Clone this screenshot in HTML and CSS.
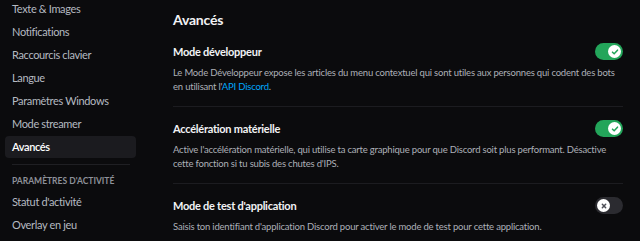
FILE: index.html
```html
<!DOCTYPE html>
<html lang="fr">
  <head>
    <meta charset="UTF-8" />
    <title>Paramètres - Avancés</title>
    <link rel="stylesheet" href="styles.css">
  </head>
  <body>
    <div class="layout">
      <nav class="sidebar">
        <div class="nav-item">Texte &amp; Images</div>
        <div class="nav-item">Notifications</div>
        <div class="nav-item">Raccourcis clavier</div>
        <div class="nav-item">Langue</div>
        <div class="nav-item">Paramètres Windows</div>
        <div class="nav-item">Mode streamer</div>
        <div class="nav-item selected">Avancés</div>
        <div class="nav-sep"></div>
        <div class="nav-header">Paramètres d'activité</div>
        <div class="nav-item">Statut d'activité</div>
        <div class="nav-item">Overlay en jeu</div>
      </nav>

      <main class="content">
        <h2 class="page-title">Avancés</h2>

        <section class="setting">
          <div class="setting-row">
            <h3 class="setting-title">Mode développeur</h3>
            <div class="switch on">
              <span class="knob">
                <svg viewBox="0 0 12 12"><path d="M3 6.2l2 2 4-4.4" /></svg>
              </span>
            </div>
          </div>
          <p class="setting-desc">
            Le Mode Développeur expose les articles du menu contextuel qui sont utiles aux personnes qui codent des bots
            en utilisant l'<a href="#">API Discord</a>.
          </p>
        </section>

        <section class="setting">
          <div class="setting-row">
            <h3 class="setting-title">Accélération matérielle</h3>
            <div class="switch on">
              <span class="knob">
                <svg viewBox="0 0 12 12"><path d="M3 6.2l2 2 4-4.4" /></svg>
              </span>
            </div>
          </div>
          <p class="setting-desc">
            Active l'accélération matérielle, qui utilise ta carte graphique pour que Discord soit plus performant. Désactive
            cette fonction si tu subis des chutes d'IPS.
          </p>
        </section>

        <section class="setting">
          <div class="setting-row">
            <h3 class="setting-title">Mode de test d'application</h3>
            <div class="switch off">
              <span class="knob">
                <svg viewBox="0 0 12 12"><path d="M4 4l4 4M8 4l-4 4" /></svg>
              </span>
            </div>
          </div>
          <p class="setting-desc">
            Saisis ton identifiant d'application Discord pour activer le mode de test pour cette application.
          </p>
        </section>
      </main>
    </div>
  </body>
</html>
```

FILE: styles.css
```css
body {
  margin: 0;
  background: #0b0b0d;
  font-family: Lato, "Noto Sans", sans-serif;
  color: #b5bac1;
  overflow: hidden;
}
.layout {
  display: flex;
  height: 241px;
}
.sidebar {
  width: 131px;
  padding: 0 8px 0 5px;
  margin-top: -2px;
  flex-shrink: 0;
}
.nav-item {
  height: 22px;
  line-height: 22px;
  margin-bottom: 1px;
  padding: 0 7px;
  border-radius: 4px;
  font-size: 11px;
  letter-spacing: -0.35px;
  color: #b5bac1;
  white-space: nowrap;
}
.nav-item.selected {
  background: #1b1b1f;
  color: #fff;
  font-weight: 600;
}
.nav-sep {
  height: 1px;
  background: #1f1f23;
  margin: 6px 6px 8px 7px;
}
.nav-header {
  padding: 0 7px;
  font-size: 8.5px;
  font-weight: 700;
  text-transform: uppercase;
  color: #8e9199;
  height: 16px;
  line-height: 16px;
  margin-bottom: 2px;
}
.content {
  flex: 1;
  padding: 0 17px 0 29px;
}
.page-title {
  margin: 10px 0 13px;
  font-size: 14px;
  letter-spacing: -0.2px;
  line-height: 20px;
  font-weight: 700;
  color: #f2f3f5;
}
.setting {
  padding: 0 0 12px;
  border-bottom: 1px solid #1c1c20;
}
.setting + .setting {
  padding-top: 13px;
}
.setting-row {
  display: flex;
  align-items: center;
  justify-content: space-between;
  height: 17px;
}
.setting-title {
  margin: 0;
  font-size: 11px;
  letter-spacing: -0.25px;
  font-weight: 700;
  color: #f2f3f5;
}
.setting-desc {
  margin: 6px 0 0;
  font-size: 9.5px;
  letter-spacing: -0.2px;
  line-height: 14px;
  color: #adb0b8;
}
.setting-desc a {
  color: #00a8fc;
  text-decoration: none;
}
.switch {
  width: 28px;
  height: 17px;
  border-radius: 9px;
  display: flex;
  align-items: center;
  padding: 0 2px;
  box-sizing: border-box;
}
.switch.on {
  background: #23a55a;
  justify-content: flex-end;
}
.switch.off {
  background: #2b2b30;
  justify-content: flex-start;
}
.knob {
  width: 13px;
  height: 13px;
  border-radius: 50%;
  background: #fff;
  display: flex;
  align-items: center;
  justify-content: center;
}
.knob svg {
  width: 10px;
  height: 10px;
  fill: none;
  stroke-width: 1.8;
  stroke-linecap: round;
  stroke-linejoin: round;
}
.switch.on .knob svg {
  stroke: #23a55a;
}
.switch.off .knob svg {
  stroke: #4e5058;
}
```
